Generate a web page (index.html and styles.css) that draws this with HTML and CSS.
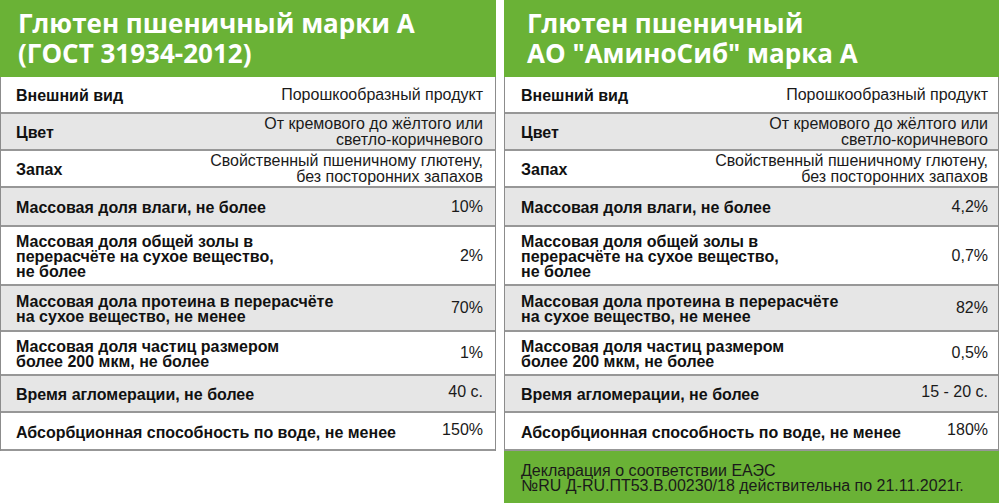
FILE: index.html
```html
<!DOCTYPE html>
<html lang="ru">
<head>
<meta charset="utf-8">
<title>Глютен пшеничный</title>
<link rel="stylesheet" href="styles.css">
</head>
<body>
<div class="wrap">
  <section class="panel panel-left">
    <header class="head">Глютен пшеничный марки А<br>(ГОСТ 31934-2012)</header>
    <div class="table">
      <div class="row r1"><div class="lbl">Внешний вид</div><div class="val">Порошкообразный продукт</div></div>
      <div class="row r2 gray"><div class="lbl">Цвет</div><div class="val">От кремового до жёлтого или<br>светло-коричневого</div></div>
      <div class="row r3"><div class="lbl">Запах</div><div class="val">Свойственный пшеничному глютену,<br>без посторонних запахов</div></div>
      <div class="row r4 gray"><div class="lbl">Массовая доля влаги, не более</div><div class="val">10%</div></div>
      <div class="row r5"><div class="lbl">Массовая доля общей золы в<br>перерасчёте на сухое вещество,<br>не более</div><div class="val">2%</div></div>
      <div class="row r6 gray"><div class="lbl">Массовая дола протеина в перерасчёте<br>на сухое вещество, не менее</div><div class="val">70%</div></div>
      <div class="row r7"><div class="lbl">Массовая доля частиц размером<br>более 200 мкм, не более</div><div class="val">1%</div></div>
      <div class="row r8 gray"><div class="lbl">Время агломерации, не более</div><div class="val">40 с.</div></div>
      <div class="row r9"><div class="lbl">Абсорбционная способность по воде, не менее</div><div class="val">150%</div></div>
    </div>
  </section>
  <section class="panel panel-right">
    <header class="head">Глютен пшеничный<br>АО "АминоСиб" марка А</header>
    <div class="table">
      <div class="row r1"><div class="lbl">Внешний вид</div><div class="val">Порошкообразный продукт</div></div>
      <div class="row r2 gray"><div class="lbl">Цвет</div><div class="val">От кремового до жёлтого или<br>светло-коричневого</div></div>
      <div class="row r3"><div class="lbl">Запах</div><div class="val">Свойственный пшеничному глютену,<br>без посторонних запахов</div></div>
      <div class="row r4 gray"><div class="lbl">Массовая доля влаги, не более</div><div class="val">4,2%</div></div>
      <div class="row r5"><div class="lbl">Массовая доля общей золы в<br>перерасчёте на сухое вещество,<br>не более</div><div class="val">0,7%</div></div>
      <div class="row r6 gray"><div class="lbl">Массовая дола протеина в перерасчёте<br>на сухое вещество, не менее</div><div class="val">82%</div></div>
      <div class="row r7"><div class="lbl">Массовая доля частиц размером<br>более 200 мкм, не более</div><div class="val">0,5%</div></div>
      <div class="row r8 gray"><div class="lbl">Время агломерации, не более</div><div class="val">15 - 20 с.</div></div>
      <div class="row r9"><div class="lbl">Абсорбционная способность по воде, не менее</div><div class="val">180%</div></div>
    </div>
    <footer class="foot">Декларация о соответствии ЕАЭС<br>№RU Д-RU.ПТ53.В.00230/18 действительна по 21.11.2021г.</footer>
  </section>
</div>
</body>
</html>
```

FILE: styles.css
```css
html, body {
  margin: 0;
  padding: 0;
  background: #ffffff;
}
body {
  font-family: "Liberation Sans", Arial, sans-serif;
  color: #111111;
}
.wrap {
  display: flex;
  gap: 8px;
  align-items: flex-start;
}
.panel {
  display: flex;
  flex-direction: column;
}
.panel-left {
  width: 496px;
}
.panel-right {
  width: 495px;
}
.head {
  background: #6ab236;
  color: #ffffff;
  font-family: "Open Sans", sans-serif;
  font-weight: 700;
  font-size: 26px;
  line-height: 30px;
  height: 77px;
  box-sizing: border-box;
  padding: 8px 0 0 18px;
}
.panel-right .head {
  padding-left: 23px;
}
.table {
  border-left: 1px solid #8c8c8c;
  border-right: 1px solid #8c8c8c;
}
.row {
  display: flex;
  align-items: center;
  justify-content: space-between;
  box-sizing: border-box;
  border-bottom: 2px solid #979797;
  padding: 0 12px 0 15px;
  background: #ffffff;
}
.panel-right .row {
  padding-right: 10px;
  padding-left: 16px;
}
.row.gray {
  background: #e6e6e6;
}
.r1 { height: 37px; }
.r2 { height: 37px; }
.r3 { height: 37px; }
.r4 { height: 39px; }
.r5 { height: 59px; }
.r6 { height: 46px; }
.r7 { height: 44px; }
.r8 { height: 37px; }
.r9 { height: 38px; }
.lbl {
  font-weight: 700;
  font-size: 16px;
  line-height: 15px;
  color: #111111;
  padding-top: 2px;
}
.val {
  font-size: 16px;
  line-height: 16px;
  text-align: right;
  color: #1a1a1a;
}
.r8 .val, .r9 .val {
  margin-top: -3px;
}
.foot {
  background: #6ab236;
  color: #1a1a1a;
  font-size: 16px;
  line-height: 15px;
  height: 52px;
  box-sizing: border-box;
  padding: 12px 0 0 17px;
}
```
